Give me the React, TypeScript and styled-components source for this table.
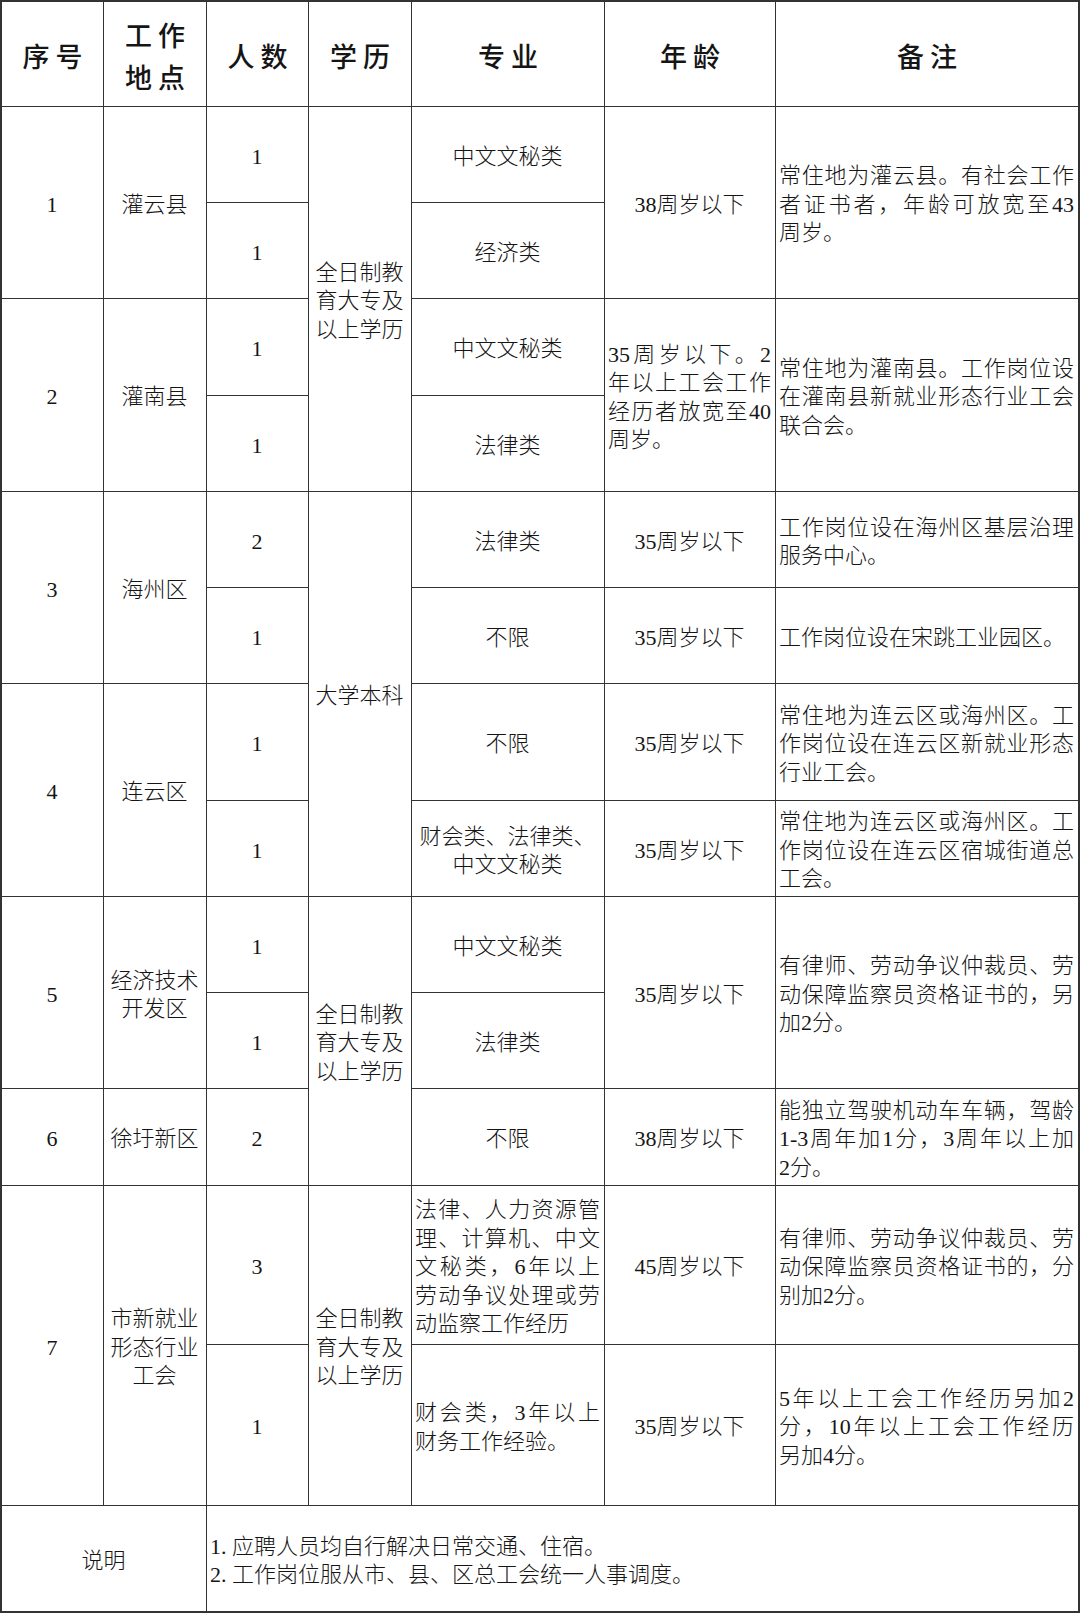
import React from 'react';
import styled, { createGlobalStyle } from 'styled-components';

const GlobalStyle = createGlobalStyle`
  html, body {
    margin: 0;
    padding: 0;
    background: #fff;
  }
  body {
    font-family: "Liberation Serif", "Noto Sans CJK SC", serif;
    color: #111;
  }
`;

type Kind = 'head' | 'center' | 'justify' | 'note';

interface CellData {
  row: string;
  col: string;
  text: string | string[];
  kind?: Kind;
}

const header = ['序号', ['工作', '地点'], '人数', '学历', '专业', '年龄', '备注'];

const degree = ['全日制教', '育大专及', '以上学历'];

const cells: CellData[] = [
  // 序号 + 工作地点
  { row: '2 / 4', col: '1', text: '1' },
  { row: '2 / 4', col: '2', text: '灌云县' },
  { row: '4 / 6', col: '1', text: '2' },
  { row: '4 / 6', col: '2', text: '灌南县' },
  { row: '6 / 8', col: '1', text: '3' },
  { row: '6 / 8', col: '2', text: '海州区' },
  { row: '8 / 10', col: '1', text: '4' },
  { row: '8 / 10', col: '2', text: '连云区' },
  { row: '10 / 12', col: '1', text: '5' },
  { row: '10 / 12', col: '2', text: ['经济技术', '开发区'] },
  { row: '12', col: '1', text: '6' },
  { row: '12', col: '2', text: '徐圩新区' },
  { row: '13 / 15', col: '1', text: '7' },
  { row: '13 / 15', col: '2', text: ['市新就业', '形态行业', '工会'] },

  // 人数
  ...['1', '1', '1', '1', '2', '1', '1', '1', '1', '1', '2', '3', '1'].map((n, i) => ({
    row: String(i + 2),
    col: '3',
    text: n,
  })),

  // 学历
  { row: '2 / 6', col: '4', text: degree },
  { row: '6 / 10', col: '4', text: '大学本科' },
  { row: '10 / 13', col: '4', text: degree },
  { row: '13 / 15', col: '4', text: degree },

  // 专业
  { row: '2', col: '5', text: '中文文秘类' },
  { row: '3', col: '5', text: '经济类' },
  { row: '4', col: '5', text: '中文文秘类' },
  { row: '5', col: '5', text: '法律类' },
  { row: '6', col: '5', text: '法律类' },
  { row: '7', col: '5', text: '不限' },
  { row: '8', col: '5', text: '不限' },
  { row: '9', col: '5', text: ['财会类、法律类、', '中文文秘类'] },
  { row: '10', col: '5', text: '中文文秘类' },
  { row: '11', col: '5', text: '法律类' },
  { row: '12', col: '5', text: '不限' },
  {
    row: '13',
    col: '5',
    kind: 'justify',
    text: ['法律、人力资源管', '理、计算机、中文', '文秘类，6年以上', '劳动争议处理或劳', '动监察工作经历'],
  },
  { row: '14', col: '5', kind: 'justify', text: ['财会类，3年以上', '财务工作经验。'] },

  // 年龄
  { row: '2 / 4', col: '6', text: '38周岁以下' },
  {
    row: '4 / 6',
    col: '6',
    kind: 'justify',
    text: ['35周岁以下。2', '年以上工会工作', '经历者放宽至40', '周岁。'],
  },
  { row: '6', col: '6', text: '35周岁以下' },
  { row: '7', col: '6', text: '35周岁以下' },
  { row: '8', col: '6', text: '35周岁以下' },
  { row: '9', col: '6', text: '35周岁以下' },
  { row: '10 / 12', col: '6', text: '35周岁以下' },
  { row: '12', col: '6', text: '38周岁以下' },
  { row: '13', col: '6', text: '45周岁以下' },
  { row: '14', col: '6', text: '35周岁以下' },

  // 备注
  {
    row: '2 / 4',
    col: '7',
    kind: 'justify',
    text: ['常住地为灌云县。有社会工作', '者证书者，年龄可放宽至43', '周岁。'],
  },
  {
    row: '4 / 6',
    col: '7',
    kind: 'justify',
    text: ['常住地为灌南县。工作岗位设', '在灌南县新就业形态行业工会', '联合会。'],
  },
  { row: '6', col: '7', kind: 'justify', text: ['工作岗位设在海州区基层治理', '服务中心。'] },
  { row: '7', col: '7', kind: 'justify', text: ['工作岗位设在宋跳工业园区。'] },
  {
    row: '8',
    col: '7',
    kind: 'justify',
    text: ['常住地为连云区或海州区。工', '作岗位设在连云区新就业形态', '行业工会。'],
  },
  {
    row: '9',
    col: '7',
    kind: 'justify',
    text: ['常住地为连云区或海州区。工', '作岗位设在连云区宿城街道总', '工会。'],
  },
  {
    row: '10 / 12',
    col: '7',
    kind: 'justify',
    text: ['有律师、劳动争议仲裁员、劳', '动保障监察员资格证书的，另', '加2分。'],
  },
  {
    row: '12',
    col: '7',
    kind: 'justify',
    text: ['能独立驾驶机动车车辆，驾龄', '1-3周年加1分，3周年以上加', '2分。'],
  },
  {
    row: '13',
    col: '7',
    kind: 'justify',
    text: ['有律师、劳动争议仲裁员、劳', '动保障监察员资格证书的，分', '别加2分。'],
  },
  {
    row: '14',
    col: '7',
    kind: 'justify',
    text: ['5年以上工会工作经历另加2', '分，10年以上工会工作经历', '另加4分。'],
  },

  // 说明
  { row: '15', col: '1 / 3', text: '说明' },
  {
    row: '15',
    col: '3 / 8',
    kind: 'note',
    text: ['1. 应聘人员均自行解决日常交通、住宿。', '2. 工作岗位服从市、县、区总工会统一人事调度。'],
  },
];

const App = () => {
  const all: CellData[] = [
    ...header.map((h, i) => ({ row: '1', col: String(i + 1), text: h, kind: 'head' as Kind })),
    ...cells,
  ];

  return (
    <>
      <GlobalStyle />
      <Sheet>
        {all.map((c, i) => {
          const kind = c.kind || 'center';
          const lines = Array.isArray(c.text) ? c.text : [c.text];
          return (
            <Cell key={i} $row={c.row} $col={c.col} $kind={kind}>
              {lines.map((l, j) => (
                <Line key={j} $justify={kind === 'justify' && j < lines.length - 1}>
                  {l}
                </Line>
              ))}
            </Cell>
          );
        })}
      </Sheet>
    </>
  );
};

export default App;

const Sheet = styled.div`
  display: grid;
  grid-template-columns: 101px 102px 101px 102px 192px 170px 302px;
  grid-template-rows:
    104px 95px 95px 96px 95px 95px 95px 116px
    95px 95px 95px 96px 158px 160px 105px;
  gap: 1px;
  padding: 2px;
  width: 1080px;
  box-sizing: border-box;
  background: #333;
`;

const Cell = styled.div<{ $row: string; $col: string; $kind: Kind }>`
  grid-row: ${(p) => p.$row};
  grid-column: ${(p) => p.$col};
  display: flex;
  flex-direction: column;
  justify-content: center;
  align-items: ${(p) => (p.$kind === 'justify' || p.$kind === 'note' ? 'stretch' : 'center')};
  text-align: ${(p) => (p.$kind === 'justify' || p.$kind === 'note' ? 'left' : 'center')};
  padding: ${(p) => (p.$kind === 'head' ? '8px 0 0 6px' : '5px 4px 0 3px')};
  background: #fff;
  font-size: ${(p) => (p.$kind === 'head' ? '27px' : '22px')};
  font-weight: ${(p) => (p.$kind === 'head' ? 500 : 300)};
  letter-spacing: ${(p) => (p.$kind === 'head' ? '6px' : '0')};
  line-height: ${(p) => (p.$kind === 'head' ? '42px' : '28.5px')};
  color: #151515;
`;

const Line = styled.span<{ $justify: boolean }>`
  display: block;
  text-align: ${(p) => (p.$justify ? 'justify' : 'inherit')};
  text-align-last: ${(p) => (p.$justify ? 'justify' : 'auto')};
`;
